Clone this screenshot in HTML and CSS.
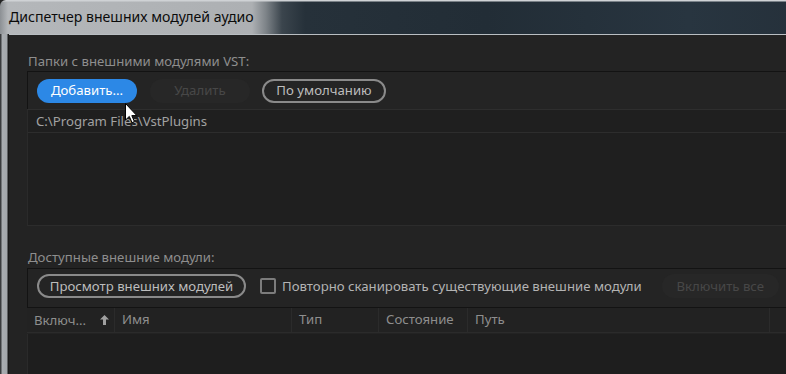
FILE: index.html
```html
<!DOCTYPE html>
<html lang="ru">
<head>
<meta charset="utf-8">
<title>Диспетчер внешних модулей аудио</title>
<link rel="stylesheet" href="styles.css">
</head>
<body>
<div class="window">
  <div class="titlebar"><span class="title">Диспетчер внешних модулей аудио</span></div>
  <div class="frame">
    <div class="client">
      <div class="section-label">Папки с внешними модулями VST:</div>
      <div class="toolbar tb1">
        <button class="btn btn-primary">Добавить...</button>
        <button class="btn btn-disabled">Удалить</button>
        <button class="btn btn-outline">По умолчанию</button>
      </div>
      <div class="folder-list">
        <div class="folder-row">C:\Program Files\VstPlugins</div>
      </div>

      <div class="section-label second">Доступные внешние модули:</div>
      <div class="toolbar tb2">
        <button class="btn btn-outline wide">Просмотр внешних модулей</button>
        <label class="check"><span class="box"></span>Повторно сканировать существующие внешние модули</label>
        <button class="btn btn-disabled enable-all">Включить все</button>
      </div>
      <div class="table-head">
        <div class="col c1">Включ...<span class="sort">
          <svg width="9" height="10" viewBox="0 0 9 10"><path d="M4.5 0 L9 4.5 H6 V10 H3 V4.5 H0 Z" fill="#a0a0a0"/></svg></span></div>
        <div class="col c2">Имя</div>
        <div class="col c3">Тип</div>
        <div class="col c4">Состояние</div>
        <div class="col c5">Путь</div>
        <div class="col c6"></div>
      </div>
      <div class="table-body"></div>
    </div>
  </div>
</div>
<svg class="cursor" width="13" height="21" viewBox="0 0 13 21">
  <path d="M0.5 0.5 V17 L4.3 13.4 L7 19.6 L9.4 18.6 L6.8 12.6 H11.8 Z" fill="#ffffff" stroke="#000000" stroke-width="1"/>
</svg>
</body>
</html>
```

FILE: styles.css
```css
html, body {
  margin: 0;
  padding: 0;
}
body {
  width: 786px;
  height: 374px;
  overflow: hidden;
  position: relative;
  background: #232323;
  font-family: "Noto Sans", "Open Sans", sans-serif;
}
.window {
  display: grid;
  grid-template-rows: 34px 340px;
  width: 786px;
  height: 374px;
}
.titlebar {
  background:
    linear-gradient(to bottom, #cfd2d5 0, #cfd2d5 1px, transparent 2px),
    linear-gradient(to right, #8c9094 0, #b4b7ba 8px, #adb0b3 252px, #7d8388 266px, #3b454d 282px, #26313a 305px, #222d36 60%, #283540 85%, #25303a 100%);
  border-top-left-radius: 6px;
  padding-left: 9px;
  display: flex;
  align-items: center;
  padding-bottom: 2px;
  box-sizing: border-box;
}
.title {
  font-size: 14.1px;
  color: #0b0b0b;
}
.frame {
  display: flex;
  background: linear-gradient(to right, #3a3c3e 0, #3a3c3e 1px, #a9adb1 2px, #a3a7ab 7px, #1a1a1a 8px);
  padding-left: 9px;
}
.client {
  flex: 1;
  background: #232323;
  border-top: 1px solid #b9bec2;
  padding-left: 18px;
  overflow: hidden;
  font-size: 13.2px;
}
.section-label {
  height: 20px;
  line-height: 20px;
  margin-top: 16px;
  padding-left: 1px;
  color: #8e8e8e;
}
.section-label.second {
  margin-top: 21px;
  height: 21px;
}
.toolbar {
  display: flex;
  align-items: center;
  border-top: 1px solid #131313;
  border-left: 1px solid #131313;
  background: #242424;
  padding-left: 9px;
}
.tb1 {
  height: 37px;
}
.tb2 {
  height: 34px;
  padding-bottom: 4px;
  border-bottom: 1px solid #131313;
}
.btn {
  font-family: inherit;
  font-size: 13.2px;
  height: 24px;
  border-radius: 12px;
  padding: 0;
  border: 2px solid transparent;
  box-sizing: border-box;
  line-height: 19px;
}
.btn-primary {
  width: 100px;
  background: #2c88e6;
  color: #ffffff;
}
.btn-disabled {
  width: 100px;
  margin-left: 13px;
  background: #272727;
  color: #474747;
}
.btn-outline {
  width: 124px;
  margin-left: 12px;
  background: transparent;
  border-color: #8a8a8a;
  color: #bdbdbd;
}
.btn-outline.wide {
  width: 209px;
  margin-left: 0;
}
.check {
  display: flex;
  align-items: center;
  margin-left: 14px;
  color: #b3b3b3;
  white-space: nowrap;
}
.box {
  width: 16px;
  height: 16px;
  box-sizing: border-box;
  border: 2px solid #7c7c7c;
  border-radius: 2px;
  margin-right: 6px;
}
.enable-all {
  width: 117px;
  margin-left: 20px;
}
.folder-list {
  height: 115px;
  background: #1f1f1f;
  border-left: 1px solid #2a2a2a;
  border-bottom: 1px solid #2c2c2c;
  border-top: 1px solid #2e2e2e;
}
.folder-row {
  height: 22px;
  line-height: 22px;
  padding-left: 8px;
  color: #a2a2a2;
  border-bottom: 1px solid #2d2d2d;
}
.table-head {
  display: flex;
  height: 24px;
  background: #222222;
  border-bottom: 1px solid #2b2b2b;
  color: #8e8e8e;
}
.col {
  box-sizing: border-box;
  line-height: 22px;
  padding-left: 7px;
  border-right: 1px solid #2b2b2b;
  white-space: nowrap;
}
.c1 { width: 88px; display: flex; align-items: center; padding-left: 7px; }
.sort { margin-left: 14px; display: flex; }
.c2 { width: 177px; }
.c3 { width: 87px; }
.c4 { width: 89px; }
.c5 { width: 302px; }
.c6 { width: 40px; border-right: none; }
.table-body {
  height: 60px;
  background: #1e1e1e;
  border-left: 1px solid #2a2a2a;
  margin-top: 1px;
}
.cursor {
  position: absolute;
  left: 125px;
  top: 103px;
}
```
